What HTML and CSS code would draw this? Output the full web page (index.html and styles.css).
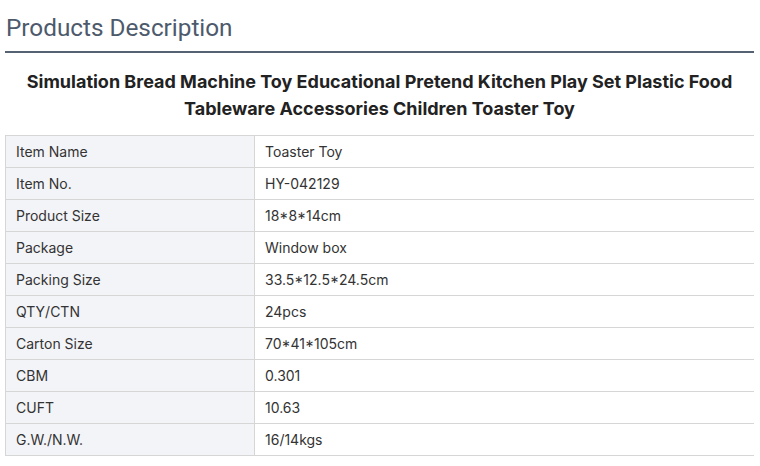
FILE: index.html
```html
<!DOCTYPE html>
<html>
<head>
<meta charset="utf-8">
<link rel="stylesheet" href="styles.css">
</head>
<body>
<div class="wrap">
  <h2 class="heading">Products Description</h2>
  <h3 class="title">Simulation Bread Machine Toy Educational Pretend Kitchen Play Set Plastic Food Tableware Accessories Children Toaster Toy</h3>
  <table class="spec">
    <tr><td class="k">Item Name</td><td class="v">Toaster Toy</td></tr>
    <tr><td class="k">Item No.</td><td class="v">HY-042129</td></tr>
    <tr><td class="k">Product Size</td><td class="v">18*8*14cm</td></tr>
    <tr><td class="k">Package</td><td class="v">Window box</td></tr>
    <tr><td class="k">Packing Size</td><td class="v">33.5*12.5*24.5cm</td></tr>
    <tr><td class="k">QTY/CTN</td><td class="v">24pcs</td></tr>
    <tr><td class="k">Carton Size</td><td class="v">70*41*105cm</td></tr>
    <tr><td class="k">CBM</td><td class="v">0.301</td></tr>
    <tr><td class="k">CUFT</td><td class="v">10.63</td></tr>
    <tr><td class="k">G.W./N.W.</td><td class="v">16/14kgs</td></tr>
  </table>
</div>
</body>
</html>
```
FILE: styles.css
```css
html, body {
  margin: 0;
  padding: 0;
  background: #fff;
}
.wrap {
  margin: 0 6px 0 5px;
  padding-top: 13px;
}
.heading {
  margin: 0;
  padding: 0 0 8px 1px;
  font-family: Roboto, "Liberation Sans", sans-serif;
  font-weight: 400;
  font-size: 24.3px;
  line-height: 30px;
  color: #4d5a6c;
  border-bottom: 2px solid #556274;
}
.title {
  margin: 15px 0 13px;
  text-align: center;
  font-family: Inter, "Liberation Sans", sans-serif;
  font-weight: 700;
  font-size: 18px;
  line-height: 27px;
  color: #222;
}
.spec {
  width: 100%;
  border-collapse: collapse;
  font-family: Inter, "Liberation Sans", sans-serif;
  font-size: 14px;
  color: #333;
}
.spec td {
  border-top: 1px solid #d6d6d6;
  border-bottom: 1px solid #d6d6d6;
  height: 31px;
  padding: 0 10px;
  vertical-align: middle;
}
.spec td.k {
  width: 228px;
  background: #f3f4f8;
  border-left: 1px solid #d6d6d6;
  border-right: 1px solid #d6d6d6;
}
.spec td.v {
  background: #fff;
}
```
